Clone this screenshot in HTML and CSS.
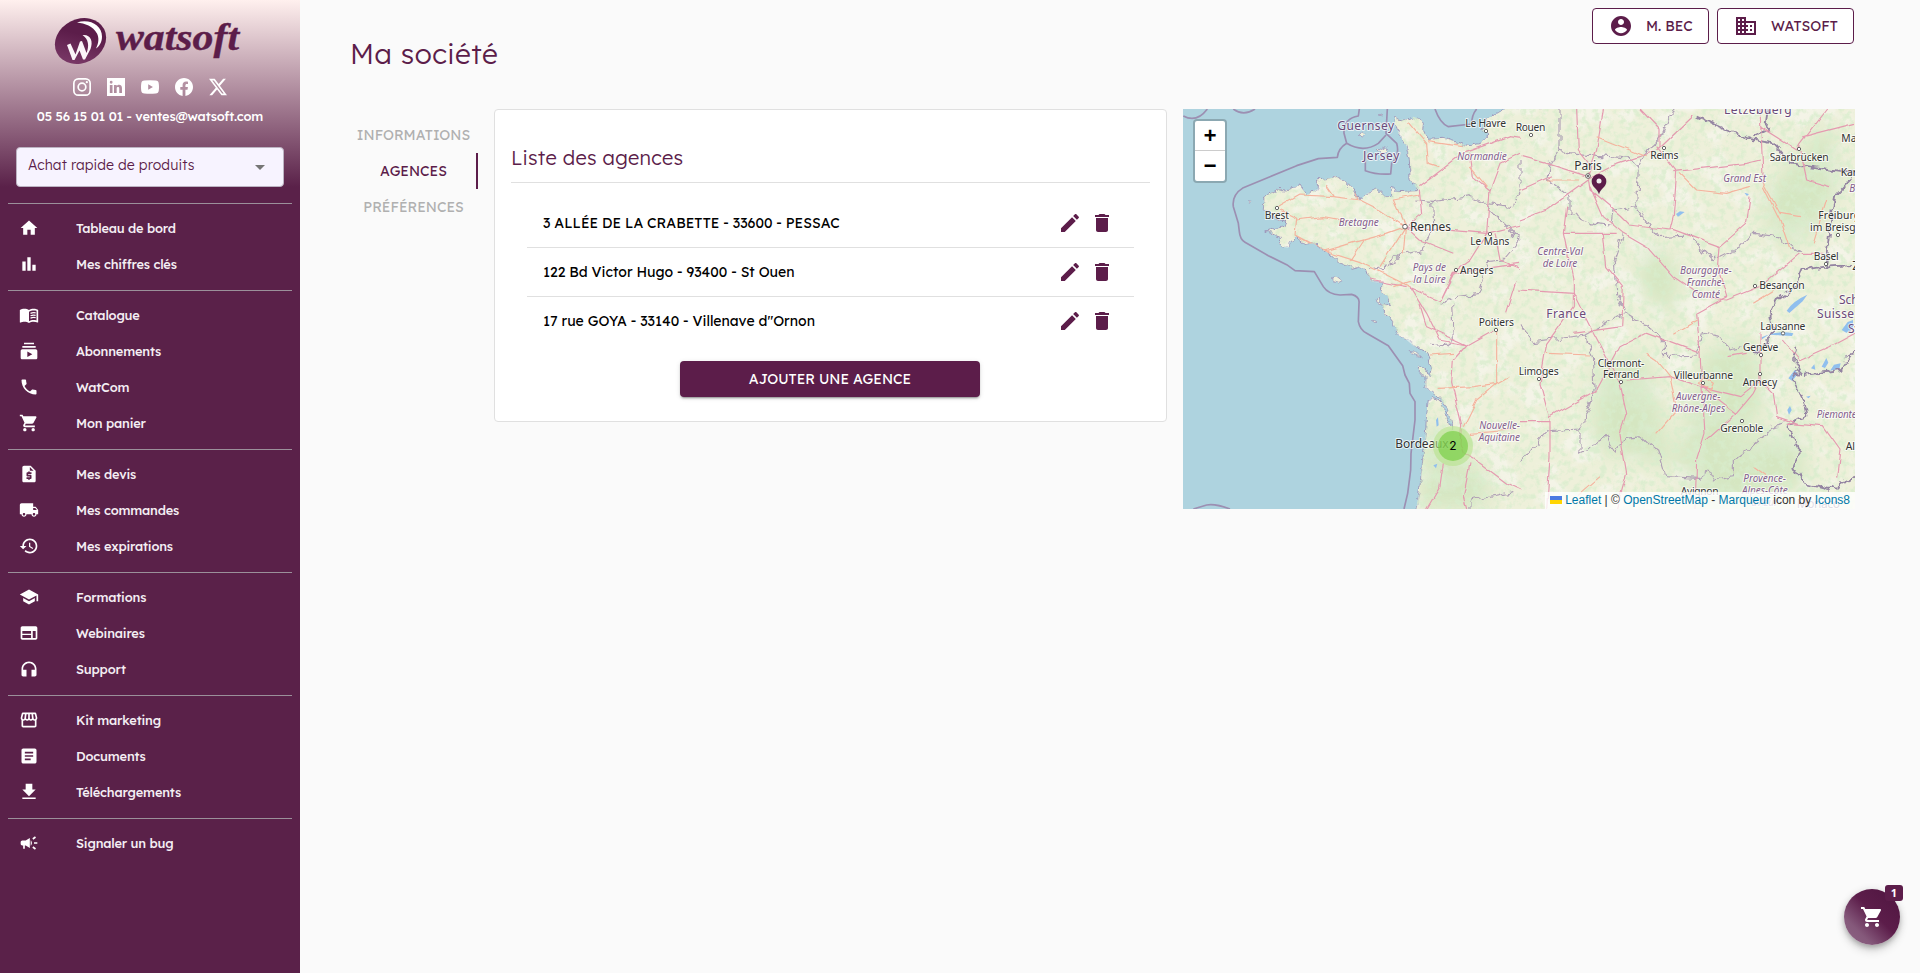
FILE: index.html
```html
<!DOCTYPE html>
<html lang="fr">
<head>
<meta charset="utf-8">
<title>Ma société</title>
<link rel="stylesheet" href="styles.css">
</head>
<body>
<aside class="sidebar">
  <svg class="logo" width="190" height="50" viewBox="0 0 190 50">
    <defs><linearGradient id="lg" x1="0" y1="1" x2="1" y2="0"><stop offset="0" stop-color="#82406f"/><stop offset=".6" stop-color="#5c1d4a"/></linearGradient></defs>
    <ellipse cx="25.500" cy="25" rx="26.500" ry="22" transform="rotate(-27 25.500 25)" fill="url(#lg)"/>
    <path d="M22 6.500c13-4 25 3 25 14 0 6-3 10-6 12 3-6 3-11 1-15C38 10 30 7.500 22 6.500z" fill="#fff"/>
    <path d="M12 29l3.500-1.500 5 11 4.500-13 2-.5 4.500 12c3-7 2-14-4-18 8-1 11 6 8 14l-5.500 10.500h-2l-3.500-9-5 9.500h-2z" fill="#fbf4f8"/>
    <text class="logo-text" x="61" y="34" textLength="123" lengthAdjust="spacingAndGlyphs">watsoft</text>
  </svg>
  <div class="social">
    <svg viewBox="0 0 16 16"><rect x=".75" y=".75" width="14.500" height="14.500" rx="4" fill="none" stroke="#fff" stroke-width="1.500"/><circle cx="8" cy="8" r="3.400" fill="none" stroke="#fff" stroke-width="1.500"/><circle cx="12.300" cy="3.700" r="1"/></svg>
    <svg viewBox="0 0 16 16"><path fill-rule="evenodd" d="M0 0h16v16H0zM2.500 6.200v7.200h2.400V6.200zM3.700 2.500a1.250 1.250 0 1 0 0 2.500 1.250 1.250 0 0 0 0-2.500zM6.200 6.200v7.200h2.400V9.400c0-1.700 2.300-1.800 2.300 0v4h2.400V8.800c0-3.300-3.500-3.400-4.700-1.600v-1z"/></svg>
    <svg viewBox="0 0 16 16"><path fill-rule="evenodd" d="M3 2.300q5-.6 10 0 2.600.2 2.800 2.700.4 3 0 6-.2 2.500-2.800 2.700-5 .6-10 0Q.4 13.500.2 11q-.4-3 0-6Q.4 2.500 3 2.300zM6.400 5.500v5L10.600 8z"/></svg>
    <svg viewBox="0 0 16 16"><path d="M16 8.050C16 3.600 12.420 0 8 0S0 3.600 0 8.050c0 4.020 2.930 7.350 6.750 7.950v-5.620H4.720V8.050h2.030V6.280c0-2.020 1.200-3.130 3.020-3.130.88 0 1.790.16 1.790.16v1.980h-1.010c-.99 0-1.300.62-1.300 1.260v1.500h2.220l-.36 2.330H9.250V16C13.070 15.400 16 12.070 16 8.050z"/></svg>
    <svg viewBox="0 0 16 16"><path fill-rule="evenodd" d="M12.600.75h2.450L9.700 6.900 16 15.250h-4.940L7.200 10.200l-4.420 5.050H.32l5.730-6.570L0 .75h5.060l3.500 4.630zm-.86 13.030h1.360L4.320 2.150H2.870z"/></svg>
  </div>
  <div class="contact">05 56 15 01 01 - ventes@watsoft.com</div>
  <div class="quick"><span>Achat rapide de produits</span><i class="caret"></i></div>
  <nav class="menu">
    <div class="group">
      <a class="item"><svg viewBox="0 0 24 24"><path d="M10 20v-6h4v6h5v-8h3L12 3 2 12h3v8z"/></svg><span>Tableau de bord</span></a>
      <a class="item"><svg viewBox="0 0 24 24"><path d="M4 9h4v11H4zM10 4h4v16h-4zM16 13h4v7h-4z"/></svg><span>Mes chiffres clés</span></a>
    </div>
    <div class="group">
      <a class="item"><svg viewBox="0 0 24 24"><path d="M21 5c-1.110-.35-2.330-.5-3.500-.5-1.950 0-4.050.4-5.500 1.500-1.450-1.100-3.550-1.500-5.500-1.500S2.450 4.900 1 6v14.650c0 .25.25.5.5.5.1 0 .15-.05.25-.05C3.100 20.450 5.050 20 6.500 20c1.950 0 4.050.4 5.500 1.500 1.350-.85 3.800-1.500 5.500-1.500 1.650 0 3.350.3 4.750 1.050.1.050.15.050.25.050.25 0 .5-.25.5-.5V6c-.6-.45-1.250-.75-2-1zm0 13.500c-1.100-.35-2.300-.5-3.500-.5-1.700 0-4.150.65-5.500 1.500V8c1.350-.85 3.800-1.500 5.500-1.500 1.200 0 2.400.15 3.500.5v11.500z"/><path d="M13.800 10c2-.8 4.200-.9 6.200-.5M13.800 12.900c2-.8 4.200-.9 6.200-.5M13.800 15.700c2-.8 4.200-.9 6.200-.5" fill="none" stroke="#fff" stroke-width="1.500"/></svg><span>Catalogue</span></a>
      <a class="item"><svg viewBox="0 0 24 24"><path d="M20 8H4V6h16v2zm-2-6H6v2h12V2zm4 10v8c0 1.100-.9 2-2 2H4c-1.100 0-2-.9-2-2v-8c0-1.100.9-2 2-2h16c1.100 0 2 .9 2 2zm-6 4l-6-3.270v6.530L16 16z"/></svg><span>Abonnements</span></a>
      <a class="item"><svg viewBox="0 0 24 24"><path d="M6.620 10.790c1.440 2.830 3.760 5.140 6.590 6.590l2.200-2.200c.27-.27.67-.36 1.020-.24 1.120.37 2.330.57 3.570.57.55 0 1 .45 1 1V20c0 .55-.45 1-1 1-9.390 0-17-7.610-17-17 0-.55.45-1 1-1h3.500c.55 0 1 .45 1 1 0 1.250.2 2.450.57 3.570.11.35.03.74-.25 1.020l-2.200 2.200z"/></svg><span>WatCom</span></a>
      <a class="item"><svg viewBox="0 0 24 24"><path d="M7 18c-1.100 0-1.990.9-1.990 2S5.900 22 7 22s2-.9 2-2-.9-2-2-2zM1 2v2h2l3.600 7.590-1.350 2.450c-.16.28-.25.61-.25.960 0 1.100.9 2 2 2h12v-2H7.420c-.14 0-.25-.11-.25-.25l.03-.12.900-1.630h7.450c.75 0 1.410-.41 1.750-1.030l3.580-6.490c.08-.14.12-.31.12-.48 0-.55-.45-1-1-1H5.210l-.94-2H1zm16 16c-1.100 0-1.990.9-1.990 2s.89 2 1.990 2 2-.9 2-2-.9-2-2-2z"/></svg><span>Mon panier</span></a>
    </div>
    <div class="group">
      <a class="item"><svg viewBox="0 0 24 24"><path d="M14 2H6c-1.100 0-1.990.9-1.990 2L4 20c0 1.100.89 2 1.990 2H18c1.100 0 2-.9 2-2V8l-6-6zm1 10h-4v1h3c.55 0 1 .45 1 1v3c0 .55-.45 1-1 1h-1v1h-2v-1H9v-2h4v-1h-3c-.55 0-1-.45-1-1v-3c0-.55.45-1 1-1h1V9h2v1h2v2zm-2-4V3.500L17.500 8H13z"/></svg><span>Mes devis</span></a>
      <a class="item"><svg viewBox="0 0 24 24"><path d="M20 8h-3V4H3c-1.100 0-2 .9-2 2v11h2c0 1.660 1.340 3 3 3s3-1.340 3-3h6c0 1.660 1.340 3 3 3s3-1.340 3-3h2v-5l-3-4zM6 18.500c-.83 0-1.500-.67-1.500-1.500s.67-1.500 1.500-1.500 1.500.67 1.500 1.500-.67 1.500-1.500 1.500zm13.500-9l1.960 2.500H17V9.500h2.500zm-1.500 9c-.83 0-1.500-.67-1.500-1.500s.67-1.500 1.500-1.500 1.500.67 1.500 1.500-.67 1.500-1.500 1.500z"/></svg><span>Mes commandes</span></a>
      <a class="item"><svg viewBox="0 0 24 24"><path d="M13 3c-4.970 0-9 4.030-9 9H1l3.890 3.890.07.14L9 12H6c0-3.870 3.130-7 7-7s7 3.130 7 7-3.130 7-7 7c-1.930 0-3.680-.79-4.940-2.060l-1.420 1.420C8.270 19.990 10.510 21 13 21c4.970 0 9-4.030 9-9s-4.030-9-9-9zm-1 5v5l4.280 2.540.72-1.210-3.500-2.080V8H12z"/></svg><span>Mes expirations</span></a>
    </div>
    <div class="group">
      <a class="item"><svg viewBox="0 0 24 24"><path d="M5 13.180v4L12 21l7-3.820v-4L12 17l-7-3.820zM12 3L1 9l11 6 9-4.910V17h2V9L12 3z"/></svg><span>Formations</span></a>
      <a class="item"><svg viewBox="0 0 24 24"><path d="M20 4H4c-1.100 0-1.990.9-1.990 2L2 18c0 1.100.9 2 2 2h16c1.100 0 2-.9 2-2V6c0-1.100-.9-2-2-2zm-5.500 14H4v-3.500h10.500V18zm0-5H4V9.500h10.500V13zm5.500 5h-3.500V9.500H20V18z"/></svg><span>Webinaires</span></a>
      <a class="item"><svg viewBox="0 0 24 24"><path d="M12 3c-4.970 0-9 4.030-9 9v7c0 1.100.9 2 2 2h4v-8H5v-1c0-3.870 3.130-7 7-7s7 3.130 7 7v1h-4v8h4c1.100 0 2-.9 2-2v-7c0-4.970-4.030-9-9-9z"/></svg><span>Support</span></a>
    </div>
    <div class="group">
      <a class="item"><svg viewBox="0 0 24 24"><path d="M21.900 8.890l-1.050-4.370c-.22-.9-1-1.520-1.910-1.520H5.050c-.9 0-1.690.63-1.900 1.520L2.100 8.890c-.24 1.020-.02 2.060.62 2.880.08.11.19.19.28.29V19c0 1.100.9 2 2 2h14c1.100 0 2-.9 2-2v-6.940c.09-.09.2-.18.28-.28.64-.82.87-1.870.62-2.890zm-2.990-3.900l1.050 4.370c.1.420.01.84-.25 1.170-.14.18-.44.47-.94.47-.61 0-1.140-.49-1.210-1.140L16.980 5l1.930-.01zM13 5h1.960l.54 4.520c.05.39-.07.78-.33 1.070-.22.26-.54.41-.95.410-.67 0-1.220-.59-1.220-1.310V5zM8.490 9.520L9.040 5H11v4.690c0 .72-.55 1.310-1.290 1.310-.34 0-.65-.15-.89-.41-.25-.29-.37-.68-.33-1.070zm-4.450-.16L5.050 5h1.970l-.58 4.860c-.08.65-.6 1.140-1.210 1.140-.49 0-.8-.29-.93-.47-.27-.32-.36-.75-.26-1.170zM5 19v-6.030c.08.01.15.03.23.03.87 0 1.660-.36 2.240-.95.6.6 1.400.95 2.310.95.87 0 1.650-.36 2.230-.93.59.57 1.390.93 2.290.93.84 0 1.640-.35 2.240-.95.58.59 1.370.95 2.240.95.08 0 .15-.02.23-.03V19H5z"/></svg><span>Kit marketing</span></a>
      <a class="item"><svg viewBox="0 0 24 24"><path d="M19 3H5c-1.100 0-2 .9-2 2v14c0 1.100.9 2 2 2h14c1.100 0 2-.9 2-2V5c0-1.100-.9-2-2-2zm-5 14H7v-2h7v2zm3-4H7v-2h10v2zm0-4H7V7h10v2z"/></svg><span>Documents</span></a>
      <a class="item"><svg viewBox="0 0 24 24"><path d="M20 9h-4V2H8v7H4l8 8 8-8zM4 18.500v2h16v-2H4z"/></svg><span>Téléchargements</span></a>
    </div>
    <div class="group">
      <a class="item"><svg viewBox="0 0 24 24"><path d="M18 11v2h4v-2h-4zm-2 6.610c.96.71 2.210 1.650 3.200 2.390.4-.53.8-1.070 1.200-1.600-.99-.74-2.240-1.680-3.200-2.400-.4.54-.8 1.080-1.200 1.610zM20.400 5.600c-.4-.53-.8-1.070-1.200-1.600-.99.74-2.240 1.680-3.200 2.400.4.53.8 1.070 1.200 1.600.96-.72 2.210-1.650 3.200-2.400zM4 9c-1.100 0-2 .9-2 2v2c0 1.100.9 2 2 2h1v4h2v-4h1l5 3V6L8 9H4zm11.500 3c0-1.330-.58-2.530-1.500-3.350v6.690c.92-.81 1.500-2.010 1.500-3.340z"/></svg><span>Signaler un bug</span></a>
    </div>
  </nav>
</aside>
<main class="main">
  <header class="top">
    <h1>Ma société</h1>
    <div class="account">
      <button class="outlined user"><svg viewBox="0 0 24 24"><path d="M12 2C6.480 2 2 6.480 2 12s4.480 10 10 10 10-4.480 10-10S17.520 2 12 2zm0 3c1.660 0 3 1.340 3 3s-1.340 3-3 3-3-1.340-3-3 1.340-3 3-3zm0 14.200c-2.500 0-4.710-1.280-6-3.220.03-1.990 4-3.080 6-3.080 1.990 0 5.970 1.090 6 3.080-1.290 1.940-3.500 3.220-6 3.220z"/></svg><span>M. BEC</span></button>
      <button class="outlined firm"><svg viewBox="0 0 24 24"><path d="M12 7V3H2v18h20V7H12zM6 19H4v-2h2v2zm0-4H4v-2h2v2zm0-4H4V9h2v2zm0-4H4V5h2v2zm4 12H8v-2h2v2zm0-4H8v-2h2v2zm0-4H8V9h2v2zm0-4H8V5h2v2zm10 12h-8v-2h2v-2h-2v-2h2v-2h-2V9h8v10zm-2-8h-2v2h2v-2zm0 4h-2v2h2v-2z"/></svg><span>WATSOFT</span></button>
    </div>
  </header>
  <div class="content">
    <div class="tabs">
      <div class="tab"><span>INFORMATIONS</span></div>
      <div class="tab active"><span>AGENCES</span></div>
      <div class="tab"><span>PRÉFÉRENCES</span></div>
    </div>
    <section class="card">
      <h2><span>Liste des agences</span></h2>
      <div class="list">
        <div class="row"><span>3 ALLÉE DE LA CRABETTE - 33600 - PESSAC</span><div class="actions"><svg viewBox="0 0 24 24"><use href="#edit"/></svg><svg viewBox="0 0 24 24"><use href="#trash"/></svg></div></div>
        <div class="row"><span>122 Bd Victor Hugo - 93400 - St Ouen</span><div class="actions"><svg viewBox="0 0 24 24"><use href="#edit"/></svg><svg viewBox="0 0 24 24"><use href="#trash"/></svg></div></div>
        <div class="row"><span>17 rue GOYA - 33140 - Villenave d"Ornon</span><div class="actions"><svg viewBox="0 0 24 24"><path id="edit" d="M3 17.250V21h3.750L17.810 9.940l-3.750-3.750L3 17.250zM20.710 7.040c.39-.39.39-1.020 0-1.410l-2.340-2.340c-.39-.39-1.020-.39-1.410 0l-1.830 1.830 3.750 3.750 1.830-1.830z"/></svg><svg viewBox="0 0 24 24"><path id="trash" d="M6 19c0 1.100.9 2 2 2h8c1.100 0 2-.9 2-2V7H6v12zM19 4h-3.500l-1-1h-5l-1 1H5v2h14V4z"/></svg></div></div>
      </div>
      <button class="add"><span>AJOUTER UNE AGENCE</span></button>
    </section>
    <div class="map">
      <svg class="tiles" width="672" height="400" viewBox="9 27 2016 1200">
        <defs>
          <path id="land" d="M640 47L655 58 680 60 700 50 722 58 730 70 728 90 745 118 790 115 840 130 870 137 905 128 930 105 918 98 905 92 920 75 925 55 960 35 990 20H2040V1240H706L715 1190 722 1140 733 1035 740 950 745 905 757 890 780 905 795 935 803 960 808 978 818 990 808 950 803 925 785 903 765 885 735 862 735 830 712 805 714 795 735 810 748 830 755 805 745 770 735 752 700 737 680 720 655 705 640 670 615 640 605 612 630 610 625 590 605 578 610 550 572 545 560 510 535 500 515 505 480 490 455 465 430 450 400 430 375 432 345 410 330 430 325 443 305 440 300 410 260 393 285 385 315 380 320 360 285 355 275 335 250 330 252 290 290 268 320 270 360 255 380 285 415 265 415 240 445 235 470 230 490 240 515 265 540 300 560 280 590 265 615 290 635 290 635 260 655 275 715 272 690 235 688 175 678 135 655 100Z"/>
          <clipPath id="landclip"><use href="#land"/></clipPath>
          <filter id="rough" x="0" y="0" width="100%" height="100%"><feTurbulence type="fractalNoise" baseFrequency=".045" numOctaves="3" seed="4"/><feDisplacementMap in="SourceGraphic" scale="20" xChannelSelector="R" yChannelSelector="G"/></filter>
          <filter id="wob" x="-5%" y="-5%" width="110%" height="110%"><feTurbulence type="fractalNoise" baseFrequency=".02" numOctaves="2" seed="9"/><feDisplacementMap in="SourceGraphic" scale="16" xChannelSelector="R" yChannelSelector="G"/></filter>
          <filter id="jag" x="-5%" y="-5%" width="110%" height="110%"><feTurbulence type="fractalNoise" baseFrequency=".04" numOctaves="2" seed="6"/><feDisplacementMap in="SourceGraphic" scale="30" xChannelSelector="R" yChannelSelector="G"/></filter>
          <filter id="fine" x="0" y="0" width="100%" height="100%"><feTurbulence type="fractalNoise" baseFrequency=".05" numOctaves="4" seed="12"/><feColorMatrix values="0 0 0 0 .69  0 0 0 0 .85  0 0 0 0 .61  4 0 0 0 -1.850"/></filter>
          <filter id="broad" x="0" y="0" width="100%" height="100%"><feTurbulence type="fractalNoise" baseFrequency=".012" numOctaves="4" seed="3"/><feColorMatrix values="0 0 0 0 .945  0 0 0 0 .935  0 0 0 0 .9  0 5 0 0 -2.500"/></filter>
          <filter id="blur"><feGaussianBlur stdDeviation="30"/></filter>
        </defs>
        <rect x="0" y="0" width="2040" height="1240" fill="#aed3df"/>
        <g fill="none" stroke="#9c8fb2" stroke-width="5" stroke-linejoin="round">
          <path d="M10 48Q50 70 82 27M160 27Q190 50 225 27M538 27L535 48Q490 55 492 100L500 130Q475 145 472 172L415 176 350 197 270 230 190 263Q155 285 160 320L175 370 178 395Q180 418 195 427L265 467 320 494 345 512 403 515 430 560Q445 583 480 585L515 583Q540 590 537 610L535 665Q540 690 560 700L625 737 668 797 675 825 688 850 690 880 705 905V960L693 1060 692 1110 683 1180 672 1227M40 1227L80 1215Q105 1210 150 1227M765 27Q780 70 805 80L875 72Q875 45 890 27M622 27L618 100 650 130Q660 165 635 190L632 222Q590 225 556 212V150M500 130Q550 160 595 130L618 105"/>
        </g>
        <g filter="url(#rough)"><use href="#land" fill="#eef0da" stroke="#9488b3" stroke-width="2.500"/>
          <path d="M538 105l10-12 10 5-8 10zM595 147l15-6 16 6-5 8-18 2zM457 530l12-2 18 14-10 5-16-5zM573 660l10-2 10 6-8 4zM690 755l20 2 14 13-30-10zM588 600l10-2 6 18-10-5zM205 305l10 2-4 6zM595 45l12-3-2 6z" fill="#eff1dc" stroke="#9488b3" stroke-width="2"/></g>
        <g clip-path="url(#landclip)">
          <rect x="0" y="0" width="2040" height="1240" filter="url(#broad)" opacity=".55"/>
          <g fill="#b7dba5" filter="url(#blur)" opacity=".45"><path d="M740 950L850 1080 930 1130 920 1227H715zM1740 300L1950 60 1980 260 1900 400 1790 440zM1240 800L1400 760 1480 1100 1240 1050zM1570 760L1700 700 1760 900 1620 1100 1480 1120zM1740 1000L1860 1000 1880 1150 1700 1227H1500L1560 1100zM1400 420L1500 500 1480 660 1370 560z"/></g>
          <rect x="0" y="0" width="2040" height="1240" filter="url(#fine)" opacity=".75"/>
          <path d="M1488 342l12-8 14 2-20 14zM1693 278l14 4-6 6zM1820 632q20-30 62-48l-14 20-40 35zM1745 712q45-22 95-12l-4 8-70-4-20 14zM1985 690l18-24 16-6v28l-20 10zM1893 805l10-12 3 16zM1925 800l14-26 6 14-10 16zM1950 812l12-18 20-4-4 16zM1825 835l20-26 8 12-16 22zM768 960l6-8 2 24-6 4zM760 1096l12-5-4 14zM1822 930l8-12 5 12-8 14zM1878 890l14-3-6 8z" fill="#90bfee"/>
          <g filter="url(#jag)" fill="none" stroke-linejoin="round">
            <path stroke="#b0a0b6" stroke-width="3.500" d="M715 300L760 305 870 290 915 310 1000 320 1020 260V180M755 300L758 380 730 450 660 465 620 500 570 510M915 310L1020 420 970 480 925 485 900 580 830 590 785 610M815 615L820 720 790 740 745 735M1140 27V150L1110 195 1100 240 1170 290V340L1240 370 1290 375 1300 330 1370 320 1375 200 1350 175 1190 160 1140 155M1375 200L1400 150 1440 120 1480 27M1370 325L1430 410 1530 405 1600 480 1680 440 1720 400 1790 410 1860 460M1330 400L1300 490 1310 580 1340 640M1020 670L1060 725 1215 705 1240 770 1245 870 1200 990 1100 995 1020 1090M1215 705L1260 680 1340 640 1420 690 1450 710 1450 770 1550 765 1570 700 1620 710 1650 750 1700 740M1200 990L1200 1060 1240 1040 1280 1010 1305 1060 1340 1015 1380 1010 1430 1050 1455 1130 1560 1135 1590 1110 1600 1140 1660 1130 1660 1080 1750 1010 1770 980 1810 970M1875 1240V1200M870 1240V1200L1000 1175"/>
            <path stroke="#9484a2" stroke-width="5.500" d="M1550 50L1640 90 1720 120 1780 130 1830 190 1960 210 2025 220M1770 27L1760 90 1720 110M2020 230L1965 290 1950 380 1935 500 1870 510 1850 560 1790 600 1770 640 1780 690 1750 740 1720 765M1935 500L2025 495M1850 740L1840 770 1860 810 1840 840 1870 900 1880 950 1820 970 1860 1050 1840 1100 1870 1150 1950 1170 2025 1130M1870 825L1980 810 2025 750"/>
          </g>
          <g filter="url(#wob)" fill="none" stroke-linejoin="round">
            <path stroke="#e59ab0" stroke-width="3.500" d="M718 272L725 340 676 380 720 420 820 460M676 380L920 400 1020 375M718 260L850 160 990 110 1025 115M870 160L880 230 930 270 960 190 1020 160M930 270L920 400 870 480 828 510 780 605M945 400L960 480 1020 505M680 560L570 540M690 560L740 640 780 720 860 735 940 690M690 565L780 605 820 520 1020 490M720 615L740 680 860 735M860 735L820 780 815 850 845 975 840 1030 850 1060 900 1090 980 1150 1025 1170M790 1090L780 1160 740 1227M870 1090L850 1190 860 1227M1010 545L980 640M1190 27L1195 150 1235 200 1225 230 1100 190 1025 170M1270 27L1250 150 1225 225M1225 235L1290 200 1380 170 1430 150 1540 45M1380 27L1440 90V145M1430 140L1490 215 1480 350 1470 390 1350 375 1320 345 1230 270 1225 235M1480 215L1700 190 1740 180M1740 27L1750 250M1470 385L1620 440 1700 370 1710 290M1620 440L1615 510 1640 590 1550 640 1560 760 1565 850 1575 1000 1550 1080 1545 1227M1225 240L1100 330 1020 360M1230 260L1270 350 1330 400 1400 440 1480 530 1570 590 1640 600 1740 560 1860 460M1160 320L1150 400 1180 540 1180 620 1100 730 1080 850 1110 960 1110 1070 1100 1227M1150 400L1310 400M1270 400L1280 500 1330 560 1325 680 1180 700M1020 570L1180 580 1240 700 1320 850 1340 940 1320 1000 1340 1120 1310 1227M1110 950L1250 870 1320 740 1400 700 1560 760M1340 840L1470 830 1560 860 1680 890 1740 840M1565 860L1670 940 1580 1020M1670 940L1720 880 1740 840 1780 880 1790 950 1850 970M1740 700V840M1640 770L1700 760M1865 460L1930 460M1940 27L1860 130 1850 150 1740 80M1860 150L1880 240 1950 260M1870 110L2025 70M1820 970L1930 980 1980 1050 1970 1130M1810 720L1860 780 1950 740 2025 700M1020 965L1110 965M1020 270L1110 230"/>
            <path stroke="#f5b39e" stroke-width="3.500" d="M290 325L360 285 460 290 540 300 600 330 676 380 620 400 530 425 430 455 345 405 350 355 300 330M350 360L430 350 510 365M676 380L640 300 720 285M676 380L670 460M676 380L600 500M345 405L430 450 540 485 690 560M510 480L550 420M436 255L460 290M520 240L530 300M685 65L740 130 745 190 775 200M745 125L850 140M870 200L920 260M640 560L700 540M750 765L820 760M770 865L880 860 950 850 985 830M950 690L950 850 890 900 850 980M870 1000L1000 990M1100 240L1200 240M1250 110L1400 170M1500 220L1550 270 1640 280 1710 260M1750 250L1800 340 1860 350M1750 260L1800 360 1830 450M1900 430L1940 300M1100 760L1230 765M1400 760L1430 780 1470 830 1490 930 1430 1000M1480 700L1550 660M1570 830l30 20-10 20-35-20zM1190 1190L1260 1130M1720 610L1800 560M1720 1100L1760 1130"/>
          </g>
        </g>
        <g fill="#fff" stroke="#666" stroke-width="3"><circle cx="291" cy="324" r="5"/><circle cx="675" cy="380" r="7"/><circle cx="918" cy="93" r="5"/><circle cx="930" cy="402" r="5"/><circle cx="828" cy="510" r="5"/><circle cx="1053" cy="105" r="5"/><circle cx="1452" cy="144" r="5"/><circle cx="1224" cy="228" r="7"/><circle cx="1857" cy="147" r="5"/><circle cx="1974" cy="405" r="5"/><circle cx="1938" cy="492" r="5"/><circle cx="1725" cy="558" r="5"/><circle cx="948" cy="690" r="5"/><circle cx="1077" cy="837" r="5"/><circle cx="1323" cy="846" r="5"/><circle cx="1569" cy="849" r="5"/><circle cx="1743" cy="765" r="5"/><circle cx="1740" cy="822" r="5"/><circle cx="1809" cy="700" r="5"/><circle cx="1686" cy="963" r="5"/></g>
        <circle cx="1224" cy="228" r="3" fill="#444"/>
        <g class="city">
          <text x="254" y="356" textLength="73">Brest</text><text class="big" x="690" y="392" textLength="123">Rennes</text><text x="856" y="81" textLength="122">Le Havre</text><text x="871" y="434" textLength="117" lengthAdjust="spacingAndGlyphs">Le Mans</text><text x="840" y="521" textLength="100">Angers</text><text x="1007" y="93" textLength="89">Rouen</text><text class="big" x="1183" y="209" textLength="82">Paris</text><text x="1411" y="176" textLength="84">Reims</text><text x="1769" y="183" textLength="177">Saarbrücken</text><text x="1984" y="127">Mannheim</text><text x="1982" y="228">Karlsruhe</text><text x="1915" y="356" textLength="125">Freiburg</text><text x="1890" y="392">im Breisgau</text><text x="1901" y="480" textLength="75">Basel</text><text class="big" x="2017" y="511">Zürich</text><text x="1738" y="568" textLength="136">Besançon</text><text x="896" y="677" textLength="106">Poitiers</text><text x="1016" y="824" textLength="120">Limoges</text><text x="1253" y="800" textLength="140">Clermont-</text><text x="1269" y="835" textLength="109">Ferrand</text><text x="1481" y="836" textLength="178">Villeurbanne</text><text x="1689" y="752" textLength="106">Genève</text><text x="1741" y="689" textLength="135">Lausanne</text><text x="1688" y="859" textLength="104">Annecy</text><text x="1621" y="997" textLength="129">Grenoble</text><text x="1502" y="1186" textLength="114">Avignon</text><text x="1997" y="1050">Alba</text><text class="big" x="646" y="1043" textLength="160">Bordeaux</text>
        </g>
        <g class="country"><text x="472" y="89" textLength="170">Guernsey</text><text x="549" y="179" textLength="109">Jersey</text><text x="1632" y="41" textLength="203">Lëtzebuerg</text><text x="1099" y="653" textLength="119">France</text><text x="1911" y="655" textLength="111">Suisse</text><text x="1977" y="612">Schweiz</text><text x="2004" y="700">Svizzera</text><text x="1850" y="1224" textLength="130">Monaco</text></g>
        <g class="region"><text x="832" y="179" textLength="148">Normandie</text><text x="476" y="379" textLength="120">Bretagne</text><text x="698" y="512" textLength="100">Pays de</text><text x="700" y="548" textLength="97">la Loire</text><text x="1630" y="246" textLength="128" lengthAdjust="spacingAndGlyphs">Grand Est</text><text x="2008" y="276">Baden</text><text x="1072" y="465" textLength="137">Centre-Val</text><text x="1088" y="501" textLength="104">de Loire</text><text x="1500" y="523" textLength="155">Bourgogne-</text><text x="1520" y="558" textLength="114">Franche-</text><text x="1535" y="594" textLength="85">Comté</text><text x="898" y="987" textLength="122">Nouvelle-</text><text x="896" y="1023" textLength="124">Aquitaine</text><text x="1488" y="900" textLength="133">Auvergne-</text><text x="1475" y="935" textLength="161">Rhône-Alpes</text><text x="1910" y="954" textLength="120">Piemonte</text><text x="1690" y="1147" textLength="128">Provence-</text><text x="1686" y="1182" textLength="137">Alpes-Côte</text><text x="1714" y="1219" textLength="80">d'Azur</text></g>
        <path d="M1257 283C1252 265 1235 262 1235 244A22 22 0 0 1 1279 244C1279 262 1262 265 1257 283z" fill="#5c1d4a"/><circle cx="1257" cy="243" r="7.500" fill="#eee"/>
      </svg>
      <div class="cluster"><b>2</b></div>
      <div class="zoom"><span>+</span><span>−</span></div>
      <div class="attribution"><i class="flag"></i><a>Leaflet</a> | © <a>OpenStreetMap</a> - <a>Marqueur</a> icon by <a>Icons8</a></div>
    </div>
  </div>
</main>
<div class="fab"><svg viewBox="0 0 24 24"><path d="M7 18c-1.100 0-1.990.9-1.990 2S5.900 22 7 22s2-.9 2-2-.9-2-2-2zM1 2v2h2l3.600 7.590-1.350 2.450c-.16.28-.25.61-.25.960 0 1.100.9 2 2 2h12v-2H7.420c-.14 0-.25-.11-.25-.25l.03-.12.900-1.630h7.450c.75 0 1.410-.41 1.750-1.030l3.580-6.490c.08-.14.12-.31.12-.48 0-.55-.45-1-1-1H5.210l-.94-2H1zm16 16c-1.100 0-1.990.9-1.990 2s.89 2 1.990 2 2-.9 2-2-.9-2-2-2z"/></svg><span class="badge">1</span></div>
</body>
</html>
```
FILE: styles.css
```css
* { box-sizing: border-box; }
body { margin: 0; display: flex; height: 973px; overflow: hidden; background: #fafafa; font-family: Lexend, Inter, "Open Sans", sans-serif; font-size: 14px; color: #000; }
svg { display: block; fill: currentColor; flex: none; }
button { font: inherit; }
span { white-space: nowrap; }

.sidebar { width: 300px; flex: none; height: 973px; display: flex; flex-direction: column; color: #fff; background: linear-gradient(180deg, #fff0ee 0, #5a2149 187px, #5a2149 100%); }
.logo { margin: 16px 0 0 55px; overflow: visible; }
.logo-text { font: italic bold 38px "Liberation Serif", serif; fill: #5c1d4a; stroke: #5c1d4a; stroke-width: .4; }
.social { display: flex; gap: 16px; justify-content: center; margin-top: 12px; }
.social svg { width: 18px; height: 18px; }
.contact { margin-top: 10px; height: 20px; line-height: 20px; text-align: center; font-size: 12.8px; font-weight: 500; letter-spacing: -.18px; white-space: nowrap; }
.quick { margin: 21px 16px 16px; height: 40px; padding: 0 18px 4px 11px; display: flex; align-items: center; justify-content: space-between; background: #f7f3ff; border: 1px solid #bcb3c2; border-radius: 4px; color: #5c1d4a; font-weight: 350; letter-spacing: .1px; }
.caret { border: 5px solid transparent; border-top-color: #757575; border-bottom: 0; margin-top: 5px; }
.group { margin: 0 8px; border-top: 1px solid #9b909a; padding: 6px 0 8px; }
.item { display: flex; align-items: center; height: 36px; padding-left: 11px; font-size: 12.8px; font-weight: 500; letter-spacing: -.17px; color: #f4eef3; }
.item svg { width: 20px; height: 20px; margin-right: 37px; color: #fff; }

.main { flex: 1; padding: 0 65px 0 50px; }
.top { height: 109px; display: flex; justify-content: space-between; align-items: flex-start; }
h1 { margin: 36px 0 0; line-height: 36px; font-size: 28px; font-weight: 350; letter-spacing: .5px; color: #5c1d4a; }
.account { display: flex; gap: 8px; margin: 8px 1px 0 0; }
.outlined { height: 36px; display: flex; align-items: center; padding: 0 0 0 16px; gap: 13px; border: 1px solid #5c1d4a; border-radius: 4px; background: #fff; color: #5c1d4a; font-weight: 370; }
.outlined svg { width: 24px; height: 24px; }
.user { width: 117px; }
.firm { width: 137px; }
.content { display: grid; grid-template-columns: 128px 673px 672px; gap: 16px; align-items: start; }
.tabs { padding-top: 8px; }
.tab { height: 36px; display: flex; align-items: center; justify-content: center; padding-left: 1px; color: #b0b0b0; font-weight: 400; letter-spacing: 0; border-right: 2px solid transparent; }
.tab.active { color: #5c1d4a; border-color: #5c1d4a; }
.card { height: 313px; padding: 28px 16px 0; background: #fff; border: 1px solid #e0e0e0; border-radius: 4px; display: flex; flex-direction: column; }
h2 { margin: 0; height: 45px; line-height: 40px; font-size: 20px; font-weight: 350; letter-spacing: .25px; color: #5c1d4a; border-bottom: 1px solid #e0e0e0; }
.list { padding: 16px 16px 0; }
.row { height: 49px; padding: 0 20px 0 16px; display: flex; align-items: center; justify-content: space-between; border-bottom: 1px solid #e0e0e0; font-weight: 380; }
.row:last-child { border-bottom-color: transparent; }
.actions { display: flex; gap: 8px; color: #5c1d4a; }
.actions svg { width: 24px; height: 24px; }
.add { align-self: center; margin: 15px 1px 0 0; width: 300px; height: 36px; border: 0; border-radius: 4px; background: #5c1d4a; color: #fff; font-weight: 400; letter-spacing: .02px; box-shadow: 0 3px 1px -2px rgba(0,0,0,.2), 0 2px 2px rgba(0,0,0,.14), 0 1px 5px rgba(0,0,0,.12); }

.map { position: relative; height: 400px; overflow: hidden; }
.tiles text { font-family: "Noto Sans", sans-serif; paint-order: stroke; stroke: #fff; stroke-opacity: .7; stroke-width: 6px; stroke-linejoin: round; }
.city text { font-size: 31px; fill: #333; }
.tiles .city .big { font-size: 36px; }
.country text { font-size: 36px; fill: #6b4a7a; }
.region text { font-size: 30px; font-style: italic; fill: #84608d; }
.cluster { position: absolute; left: 250px; top: 317px; width: 40px; height: 40px; padding: 5px; border-radius: 50%; background: rgba(181,226,140,.6); }
.cluster b { display: block; border-radius: 50%; background: rgba(110,204,57,.6); font: 12px/30px Inter, sans-serif; text-align: center; }
.zoom { position: absolute; left: 10px; top: 10px; width: 34px; border: 2px solid rgba(0,0,0,.2); border-radius: 4px; background: #fff; background-clip: padding-box; }
.zoom span { display: block; height: 30px; font: bold 22px/33px "Liberation Mono", monospace; text-align: center; }
.zoom span:first-child { height: 30px; border-bottom: 1px solid #ccc; }
.attribution { position: absolute; right: 0; bottom: 0; padding: 0 5px; height: 17px; line-height: 17px; font-family: "Liberation Sans", Arial, sans-serif; font-size: 12px; color: #333; background: rgba(255,255,255,.8); white-space: nowrap; }
.attribution a { color: #0078a8; }
.flag { display: inline-block; width: 12px; height: 8px; margin-right: 3px; background: linear-gradient(#4c7be1 50%, #ffd500 50%); }

.fab { position: absolute; left: 1844px; top: 889px; width: 56px; height: 56px; border-radius: 50%; display: flex; align-items: center; justify-content: center; color: #fff; background: linear-gradient(45deg, #8f6585 0, #85597b 25%, #5c1d4a 55%, #4f1540 100%); box-shadow: 0 3px 5px -1px rgba(0,0,0,.2), 0 6px 10px rgba(0,0,0,.14), 0 1px 8px rgba(0,0,0,.12); }
.fab svg { width: 24px; height: 24px; }
.badge { position: absolute; left: 41px; top: -4px; width: 18px; height: 16px; border-radius: 3px; background: #5c1d4a; font: bold 11px/16px "Noto Sans", sans-serif; text-align: center; }
```
